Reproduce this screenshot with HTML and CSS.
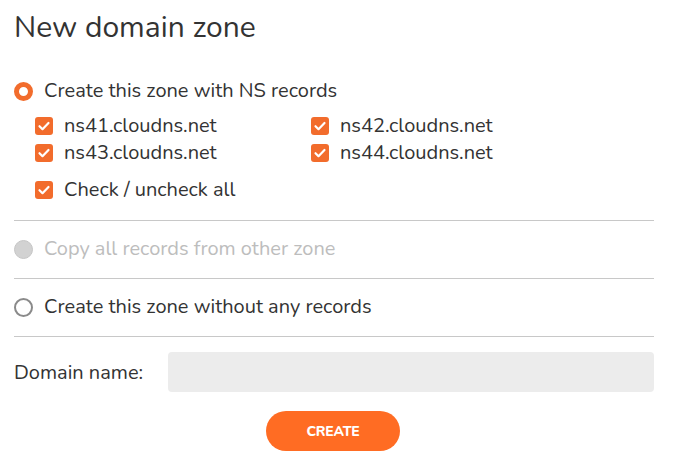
FILE: index.html
```html
<!DOCTYPE html>
<html>
<head>
<meta charset="utf-8">
<link rel="stylesheet" href="styles.css">
</head>
<body>
<div class="page">
  <h1 class="title">New domain zone</h1>

  <div class="option option-first">
    <label class="radio-row">
      <span class="radio radio-on"></span>
      <span class="label">Create this zone with NS records</span>
    </label>
    <div class="ns-grid">
      <label class="check-row"><span class="check"><svg viewBox="0 0 18 18"><path d="M4.5 9.2l3 3 6-6.2" fill="none" stroke="#fff" stroke-width="2.2" stroke-linecap="round" stroke-linejoin="round"/></svg></span><span>ns41.cloudns.net</span></label>
      <label class="check-row"><span class="check"><svg viewBox="0 0 18 18"><path d="M4.5 9.2l3 3 6-6.2" fill="none" stroke="#fff" stroke-width="2.2" stroke-linecap="round" stroke-linejoin="round"/></svg></span><span>ns42.cloudns.net</span></label>
      <label class="check-row"><span class="check"><svg viewBox="0 0 18 18"><path d="M4.5 9.2l3 3 6-6.2" fill="none" stroke="#fff" stroke-width="2.2" stroke-linecap="round" stroke-linejoin="round"/></svg></span><span>ns43.cloudns.net</span></label>
      <label class="check-row"><span class="check"><svg viewBox="0 0 18 18"><path d="M4.5 9.2l3 3 6-6.2" fill="none" stroke="#fff" stroke-width="2.2" stroke-linecap="round" stroke-linejoin="round"/></svg></span><span>ns44.cloudns.net</span></label>
    </div>
    <label class="check-row check-all"><span class="check"><svg viewBox="0 0 18 18"><path d="M4.5 9.2l3 3 6-6.2" fill="none" stroke="#fff" stroke-width="2.2" stroke-linecap="round" stroke-linejoin="round"/></svg></span><span>Check / uncheck all</span></label>
  </div>

  <div class="option option-mid">
    <label class="radio-row disabled">
      <span class="radio radio-disabled"></span>
      <span class="label">Copy all records from other zone</span>
    </label>
  </div>

  <div class="option option-mid">
    <label class="radio-row">
      <span class="radio radio-off"></span>
      <span class="label">Create this zone without any records</span>
    </label>
  </div>

  <div class="domain-row">
    <span class="domain-label">Domain name:</span>
    <div class="input"></div>
  </div>

  <div class="actions">
    <button class="btn">CREATE</button>
  </div>
</div>
</body>
</html>
```

FILE: styles.css
```css
* { box-sizing: border-box; }
html, body { margin: 0; background: #fff; }
body {
  font-family: "Nunito", "Lato", "Open Sans", sans-serif;
  color: #333;
}
.page {
  width: 640px;
  margin-left: 14px;
  padding-top: 11px;
}
.title {
  margin: 0;
  font-weight: 400;
  font-size: 30px;
  line-height: 34px;
  color: #333;
}
.option {
  border-bottom: 1px solid #c8c8c8;
}
.option-first { padding: 35px 0 19px; }
.option-mid { padding: 0 0 1px; height: 58px; display: flex; align-items: center; }
.radio-row {
  display: flex;
  align-items: center;
  gap: 11px;
  font-size: 20px;
  line-height: 22px;
}
.radio {
  width: 19px;
  height: 19px;
  border-radius: 50%;
  flex: none;
}
.radio-on { border: 5px solid #f26c2c; background: #fff; }
.radio-off { border: 2px solid #8a8a8a; background: #fff; }
.radio-disabled { background: #d2d2d2; border: 1px solid #c6c6c6; }
.disabled .label { color: #bdbdbd; }
.ns-grid {
  display: grid;
  grid-template-columns: 276px 1fr;
  row-gap: 5px;
  margin: 13px 0 0 21px;
}
.check-row {
  display: flex;
  align-items: center;
  gap: 11px;
  font-size: 20px;
  line-height: 22px;
}
.check {
  width: 18px;
  height: 18px;
  border-radius: 3px;
  background: #f26c2c;
  flex: none;
  display: flex;
}
.check svg { width: 18px; height: 18px; }
.check-all { margin: 15px 0 0 21px; }
.domain-row {
  display: flex;
  align-items: center;
  padding-top: 15px;
}
.domain-label {
  width: 154px;
  font-size: 20px;
}
.input {
  flex: 1;
  height: 40px;
  background: #ececec;
  border-radius: 4px;
}
.actions {
  display: flex;
  padding-top: 19px;
  padding-left: 252px;
}
.btn {
  width: 134px;
  height: 40px;
  border: none;
  border-radius: 20px;
  background: #ff6c23;
  color: #fff;
  font-family: "Nunito", "Lato", sans-serif;
  font-weight: 800;
  font-size: 14px;
  letter-spacing: -0.2px;
}
```
